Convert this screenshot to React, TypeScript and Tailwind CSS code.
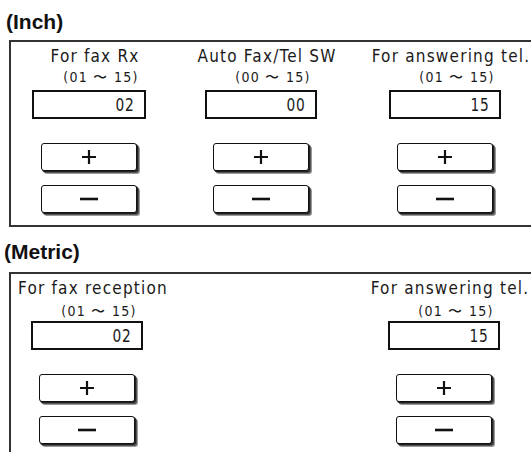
import React from "react";

const lbl = "font-['DejaVu_Sans_Condensed','DejaVu_Sans',sans-serif] text-[#1a1a1a]";

function Plus() {
  return (
    <svg width="16" height="16" viewBox="0 0 16 16">
      <path d="M8 1V15M1 8H15" stroke="#111" strokeWidth="2.2" />
    </svg>
  );
}
function Minus() {
  return (
    <svg width="18" height="4" viewBox="0 0 18 4">
      <path d="M0 2H18" stroke="#111" strokeWidth="2.6" />
    </svg>
  );
}

function Btn({ children }: { children: React.ReactNode }) {
  return (
    <div className="w-[96px] h-[28px] border border-[#111] rounded-[3px] bg-white flex items-center justify-center shadow-[1px_1px_0_#222,2px_2px_0_#555,3px_3px_0_#999]">
      {children}
    </div>
  );
}

function Col({
  label,
  range,
  value,
  w,
  rangeMt,
  valueMt,
}: {
  label: string;
  range: string;
  value: string;
  w: string;
  rangeMt: string;
  valueMt: string;
}) {
  return (
    <div className={`flex flex-col items-center ${w}`}>
      <div className={`${lbl} text-[17px] leading-[18px] tracking-[1.2px] whitespace-nowrap ml-[12px]`}>{label}</div>
      <div className={`${lbl} text-[14px] leading-[14px] tracking-[1.3px] whitespace-nowrap ml-[24px] ${rangeMt}`}>{range}</div>
      <div className={`${valueMt} w-full h-[29px] border-2 border-[#111] flex items-center justify-end pr-[9px]`}>
        <span className={`${lbl} text-[18px] leading-[20px] tracking-[1px] scale-x-[0.85] origin-right`}>{value}</span>
      </div>
      <div className="mt-[24px]">
        <Btn>
          <Plus />
        </Btn>
      </div>
      <div className="mt-[14px]">
        <Btn>
          <Minus />
        </Btn>
      </div>
    </div>
  );
}

export default function App() {
  return (
    <div className="w-[531px] h-[452px] overflow-hidden bg-white">
      <div className="h-[40px] pt-[10px] pl-[6px] font-['Liberation_Sans',Arial,sans-serif] font-bold text-[21px] leading-[24px] text-[#111]">
        (Inch)
      </div>
      <div className="ml-[9px] w-[540px] border-2 border-[#333] pt-[5px] pb-[12px] pl-[21px] flex">
        <Col label="For fax Rx" range="(01 〜 15)" value="02" w="w-[114px]" rangeMt="mt-[5px]" valueMt="mt-[6px]" />
        <div className="w-[59px]" />
        <Col label="Auto Fax/Tel SW" range="(00 〜 15)" value="00" w="w-[112px]" rangeMt="mt-[5px]" valueMt="mt-[6px]" />
        <div className="w-[72px]" />
        <Col label="For answering tel." range="(01 〜 15)" value="15" w="w-[112px]" rangeMt="mt-[5px]" valueMt="mt-[6px]" />
      </div>
      <div className="h-[45px] pt-[13px] pl-[4px] font-['Liberation_Sans',Arial,sans-serif] font-bold text-[21px] leading-[24px] text-[#111]">
        (Metric)
      </div>
      <div className="ml-[9px] w-[540px] h-[200px] border-2 border-[#333] pt-[5px] pl-[20px] flex">
        <Col label="For fax reception" range="(01 〜 15)" value="02" w="w-[112px]" rangeMt="mt-[7px]" valueMt="mt-[3px]" />
        <div className="w-[245px]" />
        <Col label="For answering tel." range="(01 〜 15)" value="15" w="w-[112px]" rangeMt="mt-[7px]" valueMt="mt-[3px]" />
      </div>
    </div>
  );
}
